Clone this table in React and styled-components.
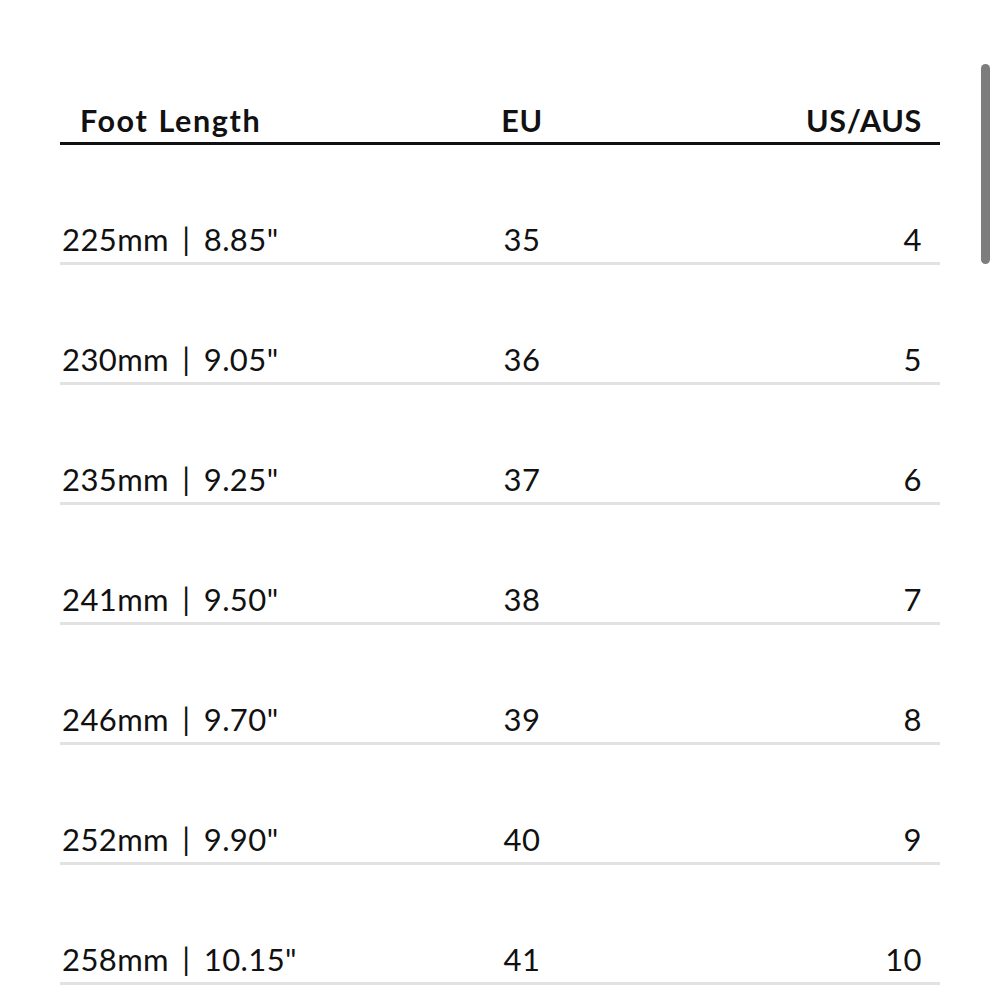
import React from 'react';
import styled, { createGlobalStyle } from 'styled-components';

const GlobalStyle = createGlobalStyle`
  html, body {
    margin: 0;
    padding: 0;
    background: #fff;
    overflow: hidden;
  }
  body {
    font-family: Lato, "Noto Sans", "Liberation Sans", sans-serif;
    color: #111;
  }
`;

const Page = styled.div`
  width: 1000px;
  height: 1000px;
  position: relative;
`;

const Table = styled.div`
  margin-left: 60px;
  width: 880px;
`;

const Row = styled.div`
  display: grid;
  grid-template-columns: 402px 120px 1fr;
  align-items: center;
  border-bottom: ${p => (p.$head ? '3px solid #111' : '3px solid #e2e2e2')};
  padding-top: ${p => (p.$head ? '100px' : '72px')};
  padding-bottom: ${p => (p.$head ? '2px' : '1px')};
  padding-right: 18px;
  line-height: ${p => (p.$head ? '40px' : '44px')};
`;

const Cell = styled.div`
  font-size: ${p => (p.$head ? '30.5px' : '31px')};
  font-weight: ${p => (p.$head ? 700 : 400)};
  letter-spacing: ${p => (p.$head ? '0.7px' : '0.4px')};
  word-spacing: ${p => (p.$head ? '1px' : '5px')};
  text-align: ${p => p.$align || 'left'};
  padding-left: ${p => p.$indent || '2px'};
  white-space: nowrap;
`;

const HeadLabel = styled(Cell)`
  letter-spacing: 1.6px;
`;

const ScrollThumb = styled.div`
  position: absolute;
  top: 64px;
  left: 981px;
  width: 9px;
  height: 200px;
  border-radius: 5px;
  background: #7d7d7d;
`;

const sizes = [
  ['225mm | 8.85"', '35', '4'],
  ['230mm | 9.05"', '36', '5'],
  ['235mm | 9.25"', '37', '6'],
  ['241mm | 9.50"', '38', '7'],
  ['246mm | 9.70"', '39', '8'],
  ['252mm | 9.90"', '40', '9'],
  ['258mm | 10.15"', '41', '10'],
];

export default function App() {
  return (
    <Page>
      <GlobalStyle />
      <Table>
        <Row $head>
          <HeadLabel $head $indent="20px">Foot Length</HeadLabel>
          <Cell $head $align="center" $indent="0">EU</Cell>
          <Cell $head $align="right" $indent="0">US/AUS</Cell>
        </Row>
        {sizes.map(([len, eu, us]) => (
          <Row key={eu}>
            <Cell>{len}</Cell>
            <Cell $align="center" $indent="0">{eu}</Cell>
            <Cell $align="right" $indent="0">{us}</Cell>
          </Row>
        ))}
      </Table>
      <ScrollThumb />
    </Page>
  );
}
